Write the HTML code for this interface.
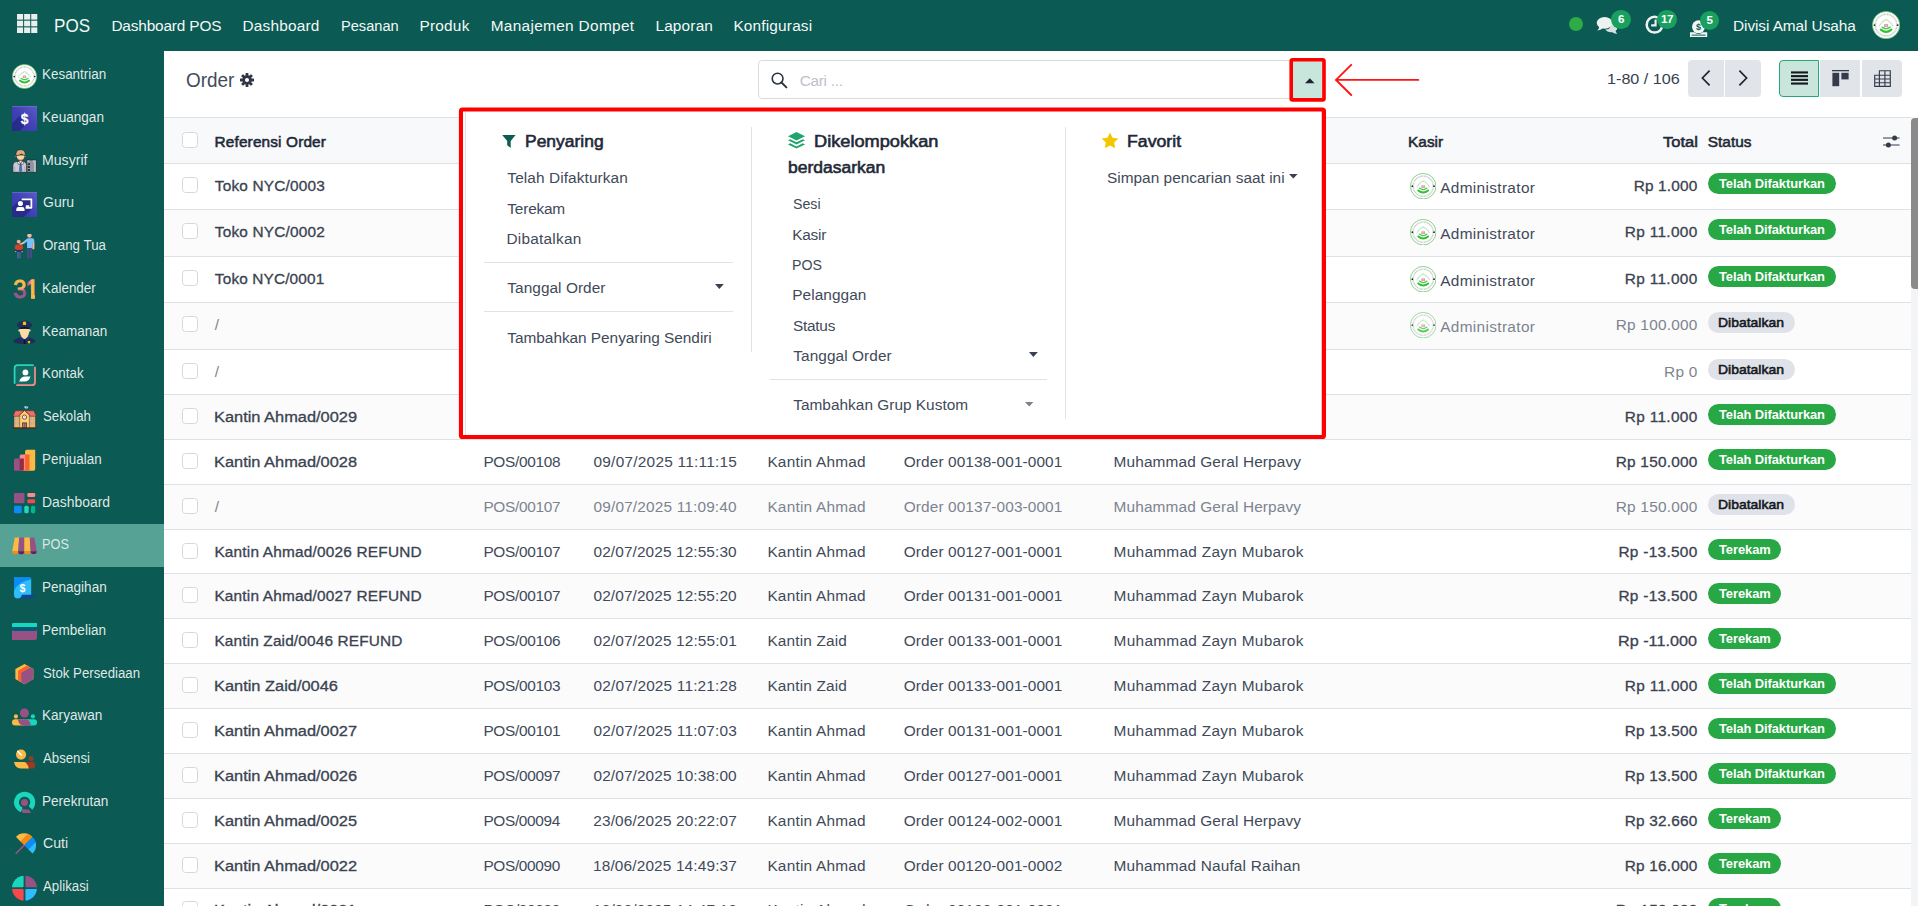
<!DOCTYPE html><html lang="id"><head><meta charset="utf-8"><title>Order - POS</title><style>
*{box-sizing:border-box;margin:0;padding:0}
html,body{width:1918px;height:906px;overflow:hidden;background:#fff}
body{font-family:"Liberation Sans",sans-serif;font-size:15.4px;color:#374151;position:relative}
.t{position:absolute;white-space:nowrap;line-height:20px}
.abs{position:absolute}
#nav{position:absolute;left:0;top:0;width:1918px;height:51px;background:#0b5a53}
#side{position:absolute;left:0;top:51px;width:164px;height:855px;background:#0b5a53}
.row{position:absolute;left:164px;width:1747px;border-bottom:1px solid #dee2e6}
.row.alt{background:#fbfbfc}
.row.hd{background:#f8f9fa;border-top:1px solid #dee2e6}
.cb{position:absolute;left:182.4px;width:15.4px;height:15.4px;border:1px solid #d3d8de;border-radius:3.5px;background:#fff}
.bdg{position:absolute;height:21.1px;border-radius:10.6px}
.bdg.g{background:#28a745}
.bdg.s{background:#dfe2e8}
.btn{position:absolute;background:#e1e4e8}
</style></head><body>
<div id="nav"></div>
<svg class="abs" style="left:17px;top:14px" width="21" height="19" viewBox="0 0 21 19"><g fill="#e8efed"><rect x="0" y="0" width="6.1" height="5.6"/><rect x="7.1" y="0" width="6.1" height="5.6"/><rect x="14.2" y="0" width="6.1" height="5.6"/><rect x="0" y="6.7" width="6.1" height="5.6"/><rect x="7.1" y="6.7" width="6.1" height="5.6"/><rect x="14.2" y="6.7" width="6.1" height="5.6"/><rect x="0" y="13.4" width="6.1" height="5.6"/><rect x="7.1" y="13.4" width="6.1" height="5.6"/><rect x="14.2" y="13.4" width="6.1" height="5.6"/></g></svg>
<span class="t" style="left:53.97px;top:16px;font-size:18.2px;color:#f4f8f7;transform:scaleX(0.9380);transform-origin:0 0;">POS</span>
<span class="t" style="left:111.40px;top:16px;font-size:15.4px;color:#f4f8f7;letter-spacing:-0.166px;">Dashboard POS</span>
<span class="t" style="left:242.50px;top:16px;font-size:15.4px;color:#f4f8f7;letter-spacing:0.204px;">Dashboard</span>
<span class="t" style="left:340.66px;top:16px;font-size:15.4px;color:#f4f8f7;transform:scaleX(0.9484);transform-origin:0 0;">Pesanan</span>
<span class="t" style="left:419.40px;top:16px;font-size:15.4px;color:#f4f8f7;letter-spacing:0.234px;">Produk</span>
<span class="t" style="left:490.70px;top:16px;font-size:15.4px;color:#f4f8f7;letter-spacing:0.319px;">Manajemen Dompet</span>
<span class="t" style="left:655.40px;top:16px;font-size:15.4px;color:#f4f8f7;letter-spacing:0.175px;">Laporan</span>
<span class="t" style="left:733.40px;top:16px;font-size:15.4px;color:#f4f8f7;letter-spacing:0.177px;">Konfigurasi</span>
<div class="abs" style="left:1569.2px;top:17.1px;width:14.2px;height:14.2px;border-radius:50%;background:#2eab47"></div><svg class="abs" style="left:1596px;top:15px" width="24" height="21" viewBox="0 0 24 21"><path d="M14.6 7.4 Q21.4 8.2 21.4 12.6 Q21.4 14.8 19.6 16 Q20 17.6 21.4 18.8 Q18.4 18.8 16.4 17.2 Q11.4 17.8 9.4 14.6 Q15.6 14.4 14.6 7.4z" fill="#d5e1df"/><ellipse cx="8.6" cy="7.8" rx="7.9" ry="5.9" fill="#eef3f2"/><path d="M3.4 11.4 Q3.2 13.8 1.2 15.4 Q4.8 15.2 7 13z" fill="#eef3f2"/></svg><svg class="abs" style="left:1644px;top:14px" width="22" height="22" viewBox="0 0 22 22"><circle cx="10.6" cy="10.7" r="7.9" fill="none" stroke="#eef3f2" stroke-width="2.5"/><path d="M11.6 5.4 V11.4 H7.2" fill="none" stroke="#eef3f2" stroke-width="2.1"/></svg><svg class="abs" style="left:1689px;top:19px" width="20" height="19" viewBox="0 0 20 19"><circle cx="9.5" cy="7.8" r="6.5" fill="#f3f7f6"/><text x="9.5" y="11.1" font-family="Liberation Sans,sans-serif" font-weight="bold" font-size="9" text-anchor="middle" fill="#0b5a53">$</text><path d="M1 13.2 H5.4 Q7 15 9.5 15 Q12 15 13.6 13.2 H18.2 V18 H1z" fill="#f3f7f6"/><rect x="2.6" y="15.6" width="14" height="1" fill="#0b5a53"/></svg><div class="abs" style="left:1611.2px;top:10.1px;width:19.4px;height:19.2px;border-radius:50%;background:#19a05f;color:#fff;font-weight:bold;font-size:11.6px;line-height:18.6px;text-align:center;letter-spacing:-0.5px">6</div><div class="abs" style="left:1657.3px;top:10.1px;width:19.4px;height:19.2px;border-radius:50%;background:#19a05f;color:#fff;font-weight:bold;font-size:11.6px;line-height:18.6px;text-align:center;letter-spacing:-0.5px">17</div><div class="abs" style="left:1699.9px;top:10.9px;width:19.4px;height:19.2px;border-radius:50%;background:#19a05f;color:#fff;font-weight:bold;font-size:11.6px;line-height:18.6px;text-align:center;letter-spacing:-0.5px">5</div>
<span class="t" style="left:1733.00px;top:16px;font-size:15.4px;color:#f4f8f7;letter-spacing:-0.077px;">Divisi Amal Usaha</span>
<div class="abs" style="left:1871.6px;top:10.7px;width:28.2px;height:28.2px"><svg width="28.2" height="28.2" viewBox="0 0 28 28" style="display:block"><circle cx="14" cy="14" r="13.55" fill="#fff" stroke="#63c463" stroke-width="0.8"/><circle cx="14" cy="14" r="10.7" fill="none" stroke="#b4b4bc" stroke-width="1.6" stroke-dasharray="0.9 0.6" opacity=".8"/><path d="M7.4 15.2 Q8.2 12 14 8.6 Q19.8 12 20.6 15.2" fill="none" stroke="#6fd36f" stroke-width="0.9" stroke-dasharray="1.1 0.5"/><path d="M8.4 12.2 Q10 9.8 14 7.6 Q18 9.8 19.6 12.2" fill="none" stroke="#a8e5a8" stroke-width="0.6" stroke-dasharray="0.8 0.6"/><rect x="12" y="13" width="4" height="2.8" rx="0.5" fill="#e07fa6" opacity=".85"/><path d="M13 13.9 H15 M13.4 14.9 H14.6" stroke="#fbe3ec" stroke-width="0.5"/><path d="M10 16 Q14 19.2 18 16" fill="none" stroke="#45cc45" stroke-width="1.35" stroke-linecap="round"/><path d="M8.8 18.5 Q14 22.9 19.2 18.5" fill="none" stroke="#2fc22f" stroke-width="2.1" stroke-linecap="round"/><circle cx="2.5" cy="14" r="0.95" fill="#222"/><circle cx="25.5" cy="14" r="0.95" fill="#222"/></svg></div>
<div id="side"></div>
<div class="abs" style="left:12px;top:63.5px;width:25px;height:25px"><svg width="25" height="25" viewBox="0 0 28 28" style="display:block"><circle cx="14" cy="14" r="13.55" fill="#fff" stroke="#63c463" stroke-width="0.8"/><circle cx="14" cy="14" r="10.7" fill="none" stroke="#b4b4bc" stroke-width="1.6" stroke-dasharray="0.9 0.6" opacity=".8"/><path d="M7.4 15.2 Q8.2 12 14 8.6 Q19.8 12 20.6 15.2" fill="none" stroke="#6fd36f" stroke-width="0.9" stroke-dasharray="1.1 0.5"/><path d="M8.4 12.2 Q10 9.8 14 7.6 Q18 9.8 19.6 12.2" fill="none" stroke="#a8e5a8" stroke-width="0.6" stroke-dasharray="0.8 0.6"/><rect x="12" y="13" width="4" height="2.8" rx="0.5" fill="#e07fa6" opacity=".85"/><path d="M13 13.9 H15 M13.4 14.9 H14.6" stroke="#fbe3ec" stroke-width="0.5"/><path d="M10 16 Q14 19.2 18 16" fill="none" stroke="#45cc45" stroke-width="1.35" stroke-linecap="round"/><path d="M8.8 18.5 Q14 22.9 19.2 18.5" fill="none" stroke="#2fc22f" stroke-width="2.1" stroke-linecap="round"/><circle cx="2.5" cy="14" r="0.95" fill="#222"/><circle cx="25.5" cy="14" r="0.95" fill="#222"/></svg></div>
<span class="t" style="left:42.35px;top:64px;font-size:15.4px;color:rgba(255,255,255,.88);transform:scaleX(0.8720);transform-origin:0 0;">Kesantrian</span>
<div class="abs" style="left:12px;top:106.2px;width:25px;height:25px"><svg width="25" height="25" viewBox="0 0 25 25" style="display:block"><defs><linearGradient id="gk" x1="1" y1="0" x2="0" y2="1"><stop offset="0" stop-color="#5a5ac8"/><stop offset=".5" stop-color="#4141b6"/><stop offset="1" stop-color="#3434a8"/></linearGradient></defs><rect width="25" height="25" rx="0.6" fill="url(#gk)"/><rect width="25" height="0.8" fill="#7a7ad6" opacity=".7"/><path d="M9 8.6 L0 17.6 V25 H7.4 L16.4 16z" fill="#272a86" opacity=".9"/><text x="12.5" y="17.5" font-family="Liberation Sans,sans-serif" font-weight="bold" font-size="15.2" text-anchor="middle" fill="#fff" stroke="#fff" stroke-width="0.3" textLength="7.6" lengthAdjust="spacingAndGlyphs">$</text></svg></div>
<span class="t" style="left:42.34px;top:107px;font-size:15.4px;color:rgba(255,255,255,.88);transform:scaleX(0.8833);transform-origin:0 0;">Keuangan</span>
<div class="abs" style="left:12px;top:148.9px;width:25px;height:25px"><svg width="25" height="25" viewBox="0 0 25 25" style="display:block"><rect x="14.7" y="11" width="9.7" height="12.3" rx="0.8" fill="#8e95a2" stroke="#22262b" stroke-width="0.7"/><path d="M15.4 11.4 H18 L17.2 13 H15.4z M20.4 11.4 H23.8 V22.8 H22 V14.4z" fill="#b9c0cb"/><g fill="#2b2e33"><rect x="15.8" y="14.2" width="2.2" height="1.9" rx="0.6"/><rect x="15.8" y="17.1" width="2.2" height="1.9" rx="0.6"/><rect x="15.8" y="20" width="2.2" height="1.9" rx="0.6"/></g><path d="M0.8 23.3 V16.4 Q0.8 12.7 4.6 12.5 H11.6 Q14.7 12.7 14.7 16.4 V23.3z" fill="#c9ccd7" stroke="#22262b" stroke-width="0.8"/><path d="M2.8 23 V17.6 M12.8 23 V17.6" stroke="#a9adb9" stroke-width="1"/><path d="M6.9 11 H10.3 V13.6 L8.6 14.8 L6.9 13.6z" fill="#fbd5a6" stroke="#22262b" stroke-width="0.6"/><path d="M5.4 12.7 L6.9 12.4 L8.6 14.6 L6.4 15.6z M11.8 12.7 L10.3 12.4 L8.6 14.6 L10.8 15.6z" fill="#f1f3f7" stroke="#22262b" stroke-width="0.5"/><path d="M8 15 H9.2 L9.9 21.6 L8.6 23.2 L7.3 21.6z" fill="#4a78c4" stroke="#22304a" stroke-width="0.4"/><circle cx="4" cy="7.2" r="0.9" fill="#fbd5a6" stroke="#22262b" stroke-width="0.5"/><circle cx="13.2" cy="7.2" r="0.9" fill="#fbd5a6" stroke="#22262b" stroke-width="0.5"/><path d="M4.2 6 Q4.2 11.2 8.6 11.3 Q13 11.2 13 6z" fill="#fbd5a6" stroke="#22262b" stroke-width="0.6"/><path d="M3.9 6.6 Q3.4 0.7 8.6 0.7 Q13.8 0.7 13.3 6.6 Q11.4 6.4 9.6 5 Q7 6.6 3.9 6.6z" fill="#d9ad7c" stroke="#22262b" stroke-width="0.6"/></svg></div>
<span class="t" style="left:42.30px;top:150px;font-size:15.4px;color:rgba(255,255,255,.88);transform:scaleX(0.9160);transform-origin:0 0;">Musyrif</span>
<div class="abs" style="left:12px;top:191.7px;width:25px;height:25px"><svg width="25" height="25" viewBox="0 0 25 25" style="display:block"><defs><linearGradient id="gg" x1="1" y1="0" x2="0" y2="1"><stop offset="0" stop-color="#5a5ac8"/><stop offset=".5" stop-color="#4141b6"/><stop offset="1" stop-color="#3434a8"/></linearGradient></defs><rect width="25" height="25" rx="0.6" fill="url(#gg)"/><rect width="25" height="0.8" fill="#7a7ad6" opacity=".7"/><path d="M9 6.4 L0 15.4 V25 H11.6 L20.4 16.4 L20.4 7z" fill="#272a86" opacity=".9"/><path d="M9.6 7.3 H19.4 V15.8 H13.6" fill="none" stroke="#fff" stroke-width="1.8" stroke-linejoin="round"/><rect x="13.8" y="13.3" width="3.6" height="1.9" fill="#fff"/><circle cx="8.4" cy="11.5" r="2.55" fill="#fff"/><path d="M4.3 18.9 V17.2 Q4.3 15.1 6.6 15.1 H10.2 Q12.5 15.1 12.5 17.2 V18.9z" fill="#fff"/></svg></div>
<span class="t" style="left:42.74px;top:192px;font-size:15.4px;color:rgba(255,255,255,.88);transform:scaleX(0.9097);transform-origin:0 0;">Guru</span>
<div class="abs" style="left:12px;top:234.4px;width:25px;height:25px"><svg width="25" height="25" viewBox="0 0 25 25" style="display:block"><circle cx="17.45" cy="1.6" r="2.2" fill="#fcb9a0"/><rect x="15.1" y="13.6" width="2.1" height="10.8" fill="#484a8c"/><rect x="17.8" y="13.6" width="2.1" height="10.8" fill="#484a8c"/><path d="M20.3 8.6 H22.4 V14.4 Q22.4 15.3 21.4 15.3 Q20.3 15.3 20.3 14.4z" fill="#fcb9a0"/><path d="M15.1 13.9 V7.6 L12.6 9.4 L11.4 7.6 L14.6 4.9 Q15.2 4.3 16.2 4.3 H20.4 Q22.3 4.3 22.3 6.2 V9 H20.2 V13.9z" fill="#7cc0fb"/><path d="M12.7 9.3 L9 10.9 Q7.6 11.2 7.4 10.2 Q7.4 9.4 8.6 9.2 L11.6 7.7z" fill="#fcb9a0"/><rect x="5.1" y="17" width="1.7" height="7.4" fill="#4f6394"/><rect x="7.2" y="17" width="1.7" height="7.4" fill="#4a5a90"/><path d="M3.2 15.4 H10.6 V17.8 H3.2z" fill="#252f66"/><rect x="2.9" y="17.3" width="1.5" height="0.8" fill="#f3c09a"/><rect x="9.4" y="17.3" width="1.5" height="0.8" fill="#f3c09a"/><circle cx="6.7" cy="7.6" r="1.95" fill="#f9a890"/><path d="M2.7 14 Q2.7 10.4 5 10.4 H8.8 Q11.1 10.4 11.1 14 Q11 16 6.9 16 Q2.8 16 2.7 14z" fill="#c8452c"/></svg></div>
<span class="t" style="left:42.78px;top:235px;font-size:15.4px;color:rgba(255,255,255,.88);transform:scaleX(0.8658);transform-origin:0 0;">Orang Tua</span>
<div class="abs" style="left:12px;top:277.2px;width:25px;height:25px"><svg width="25" height="25" viewBox="0 0 25 25" style="display:block"><defs><linearGradient id="g3" gradientUnits="userSpaceOnUse" x1="0" y1="2.7" x2="0" y2="21.9"><stop offset="0" stop-color="#fbb945"/><stop offset=".44" stop-color="#fbb945"/><stop offset=".5" stop-color="#f58c8e"/><stop offset=".56" stop-color="#a2548c"/><stop offset="1" stop-color="#a2548c"/></linearGradient><linearGradient id="g1" gradientUnits="userSpaceOnUse" x1="15.4" y1="0" x2="19.6" y2="0"><stop offset="0" stop-color="#a2548c"/><stop offset=".55" stop-color="#e07a92"/><stop offset=".8" stop-color="#f58c8e"/><stop offset="1" stop-color="#fbb945"/></linearGradient></defs><text x="1.2" y="21.2" font-family="Liberation Sans,sans-serif" font-size="26.4" fill="url(#g3)" stroke="url(#g3)" stroke-width="0.9" textLength="13.2" lengthAdjust="spacingAndGlyphs">3</text><clipPath id="c1"><rect x="14" y="0" width="5.8" height="12.5"/><rect x="19" y="0" width="4" height="25"/></clipPath><text x="13.5" y="21.2" clip-path="url(#c1)" font-family="Liberation Sans,sans-serif" font-size="26.4" fill="url(#g1)" stroke="url(#g1)" stroke-width="1.5" textLength="13.2" lengthAdjust="spacingAndGlyphs">1</text></svg></div>
<span class="t" style="left:42.35px;top:278px;font-size:15.4px;color:rgba(255,255,255,.88);transform:scaleX(0.8730);transform-origin:0 0;">Kalender</span>
<div class="abs" style="left:12px;top:319.9px;width:25px;height:25px"><svg width="25" height="25" viewBox="0 0 25 25" style="display:block"><path d="M1.4 21.4 Q2 18.4 9.2 17.2 H15.8 Q23 18.4 23.6 21.4 Q23 23.4 12.5 24.1 Q2 23.4 1.4 21.4z" fill="#1d2d5c"/><path d="M9.3 13 H15.7 V17.4 L12.5 19.8 L9.3 17.4z" fill="#f6cfa0"/><path d="M9.2 16.8 L12.5 19.6 L15.8 16.8 L16.6 18 L13.6 20.6 H11.4 L8.4 18z" fill="#243a78"/><rect x="11.7" y="19.4" width="1.6" height="4.7" fill="#111318"/><rect x="15.9" y="21.1" width="2.2" height="2.2" rx="0.3" fill="#f0c40c"/><circle cx="7.3" cy="10.6" r="1" fill="#fbe0ba"/><circle cx="17.7" cy="10.6" r="1" fill="#fbe0ba"/><path d="M7.7 8.4 H17.3 V11.6 Q17 15.6 14.6 17.2 Q12.5 18.2 10.4 17.2 Q8 15.6 7.7 11.6z" fill="#fbd9ab"/><path d="M7.3 7.6 Q12.5 6.4 17.7 7.6 L17.4 9 Q12.5 8.4 7.6 9z" fill="#0d0e12"/><path d="M4.9 5.2 Q5.4 1.8 12.5 0.3 Q19.6 1.8 20.1 5.2 Q19.6 6.8 17.8 7.7 Q12.5 6.5 7.2 7.7 Q5.4 6.8 4.9 5.2z" fill="#1d2d5c"/><path d="M10.9 2.6 Q10.9 1.4 12.5 1.4 Q14.1 1.4 14.1 2.6 V5.1 H10.9z" fill="#f0c40c"/></svg></div>
<span class="t" style="left:42.35px;top:321px;font-size:15.4px;color:rgba(255,255,255,.88);transform:scaleX(0.8754);transform-origin:0 0;">Keamanan</span>
<div class="abs" style="left:12px;top:362.6px;width:25px;height:25px"><svg width="25" height="25" viewBox="0 0 25 25" style="display:block"><rect x="2.8" y="2.4" width="20" height="19.6" rx="3" fill="#136c63"/><path d="M2.6 20 V5.2 Q2.6 2.2 5.6 2.2 H21" fill="none" stroke="#2bd4b8" stroke-width="1.8" stroke-linecap="round"/><path d="M23 4.4 V19.2 Q23 22.2 20 22.2 H5" fill="none" stroke="#f08a8c" stroke-width="1.8" stroke-linecap="round"/><circle cx="13.4" cy="9.4" r="2.9" fill="#fff"/><path d="M7.2 18.4 Q8.6 13.4 13.4 13.4 H18.4 Q17.2 18.4 12.4 18.4z" fill="#fff"/></svg></div>
<span class="t" style="left:42.36px;top:363px;font-size:15.4px;color:rgba(255,255,255,.88);transform:scaleX(0.8684);transform-origin:0 0;">Kontak</span>
<div class="abs" style="left:12px;top:405.4px;width:25px;height:25px"><svg width="25" height="25" viewBox="0 0 25 25" style="display:block"><path d="M12.5 5.6 V2.6" stroke="#3a2a2a" stroke-width="0.5"/><path d="M12.4 1.2 L16.4 1.8 L15.4 3.6 L12.6 3.2z" fill="#dfeaf5"/><path d="M13.6 1.6 L15.4 2 L14.8 3 L13.6 2.8z" fill="#5aa7e0"/><rect x="2" y="11" width="21.4" height="11.8" fill="#f2b45a" stroke="#5a2f2a" stroke-width="0.5"/><path d="M1 11.1 L3.4 5.8 H21.8 L24.2 11.1z" fill="#f0706a" stroke="#5a2f2a" stroke-width="0.5"/><path d="M7.7 22.8 V10 L12.5 5.6 L17.4 10 V22.8z" fill="#f8d477" stroke="#5a2f2a" stroke-width="0.5"/><path d="M6.9 10.6 L12.5 5.4 L18.1 10.6" fill="none" stroke="#8a2f2c" stroke-width="0.8"/><circle cx="12.5" cy="12.1" r="2.1" fill="#fff" stroke="#8a2a2a" stroke-width="0.9"/><path d="M12.5 11 V12.2 H13.3" stroke="#777" stroke-width="0.4" fill="none"/><rect x="10.5" y="17.9" width="4.2" height="4.9" fill="#b97a78" stroke="#4a1f22" stroke-width="0.7"/><path d="M12.6 18 V22.8" stroke="#4a1f22" stroke-width="0.4"/><g fill="#a9b1be"><rect x="2.75" y="12.5" width="1.5" height="2.8"/><rect x="5.3" y="12.5" width="1.5" height="2.8"/><rect x="2.75" y="16.9" width="1.5" height="2.8"/><rect x="5.3" y="16.9" width="1.5" height="2.8"/><rect x="18.4" y="12.5" width="1.5" height="2.8"/><rect x="21" y="12.5" width="1.5" height="2.8"/><rect x="18.4" y="16.9" width="1.5" height="2.8"/><rect x="21" y="16.9" width="1.5" height="2.8"/></g><rect x="0.2" y="22.6" width="24.4" height="1" fill="#4a2a25"/></svg></div>
<span class="t" style="left:42.99px;top:406px;font-size:15.4px;color:rgba(255,255,255,.88);transform:scaleX(0.8618);transform-origin:0 0;">Sekolah</span>
<div class="abs" style="left:12px;top:448.1px;width:25px;height:25px"><svg width="25" height="25" viewBox="0 0 25 25" style="display:block"><path d="M13.1 22.7 V3.4 Q13.1 1.8 14.7 1.8 H23.2 V21.1 Q23.2 22.7 21.6 22.7z" fill="#fbb945"/><path d="M7.7 22.7 V8 Q7.7 6.4 9.3 6.4 H13.1 V22.7z" fill="#fb8a8c"/><path d="M13.1 6.4 H17.5 V21.6 Q17.5 22.7 16.4 22.7 H13.1z" fill="#f9642a"/><path d="M2 22.7 V12.2 Q2 10.6 3.6 10.6 H7.7 V22.7z" fill="#985184"/><path d="M7.7 10.6 H11.9 V21.6 Q11.9 22.7 10.8 22.7 H7.7z" fill="#962b48"/></svg></div>
<span class="t" style="left:42.35px;top:449px;font-size:15.4px;color:rgba(255,255,255,.88);transform:scaleX(0.8715);transform-origin:0 0;">Penjualan</span>
<div class="abs" style="left:12px;top:490.9px;width:25px;height:25px"><svg width="25" height="25" viewBox="0 0 25 25" style="display:block"><rect x="2" y="2" width="10.5" height="10.3" rx="1.3" fill="#985184"/><rect x="15.3" y="2" width="7.9" height="4" rx="1.3" fill="#fb8a8c"/><rect x="15.3" y="8.2" width="7.9" height="4.1" rx="1.3" fill="#fb464c"/><rect x="2" y="14.8" width="7.7" height="7.4" rx="1.3" fill="#0a8cf4"/><rect x="12.3" y="14.8" width="4.4" height="7.4" rx="1.5" fill="#1ad9c0"/><rect x="19" y="14.8" width="4.2" height="7.4" rx="1.5" fill="#03b58e"/></svg></div>
<span class="t" style="left:42.31px;top:492px;font-size:15.4px;color:rgba(255,255,255,.88);transform:scaleX(0.9035);transform-origin:0 0;">Dashboard</span>
<div class="abs" style="left:0;top:524.2px;width:164px;height:42.8px;background:#56a295"></div>
<div class="abs" style="left:12px;top:533.6px;width:25px;height:25px"><svg width="25" height="25" viewBox="-0.2 0 25.4 25" style="display:block"><path d="M2.6 3.3 H7.1 L6.1 17.2 H0z" fill="#fbb945"/><path d="M0 17.2 H6.1 A3.05 3.2 0 0 1 0 17.2z" fill="#fb8a0c"/><path d="M7.1 3.3 H12.3 L12.3 17.2 H6.1z" fill="#985184"/><path d="M6.1 17.2 H12.3 A3.10 3.2 0 0 1 6.1 17.2z" fill="#6e1d5c"/><path d="M12.3 3.3 H17.85 L18.65 17.2 H12.3z" fill="#fbb945"/><path d="M12.3 17.2 H18.65 A3.17 3.2 0 0 1 12.3 17.2z" fill="#fb8a0c"/><path d="M17.85 3.3 H22.4 L25 17.2 H18.65z" fill="#985184"/><path d="M18.65 17.2 H25 A3.18 3.2 0 0 1 18.65 17.2z" fill="#6e1d5c"/></svg></div>
<span class="t" style="left:42.40px;top:534px;font-size:15.4px;color:rgba(255,255,255,.78);transform:scaleX(0.8281);transform-origin:0 0;">POS</span>
<div class="abs" style="left:12px;top:576.3px;width:25px;height:25px"><svg width="25" height="25" viewBox="0 0 25 25" style="display:block"><path d="M9.6 18.7 H23.2 Q22.6 22.5 19.4 22.5 H6z" fill="#144496"/><path d="M2 1.6 H17.8 Q19.2 1.6 19.2 3 V18.7 H9.8 Q9.4 22.5 5.6 22.5 Q2 22.5 2 18.8z" fill="#2ebcfa"/><path d="M2 1.6 H17.8 Q19.2 1.6 19.2 3 V3.6 Q6 5.4 2 15z" fill="#0a8cf4"/><text x="10.5" y="15.6" font-family="Liberation Sans,sans-serif" font-weight="bold" font-size="10.6" text-anchor="middle" fill="#fff">$</text></svg></div>
<span class="t" style="left:42.34px;top:577px;font-size:15.4px;color:rgba(255,255,255,.88);transform:scaleX(0.8788);transform-origin:0 0;">Penagihan</span>
<div class="abs" style="left:12px;top:619.1px;width:25px;height:25px"><svg width="25" height="25" viewBox="0 0 25.2 25" style="display:block"><path d="M0 5.3 Q0 3.85 1.5 3.85 H25.2 V8.05 H0z" fill="#1ad6bc"/><rect x="0" y="8.05" width="25.2" height="3.9" fill="#005c78"/><path d="M0 10.9 L1.4 11.9 H23.8 L25.2 10.9 V19.6 L23.8 20.95 H0z" fill="#985184"/></svg></div>
<span class="t" style="left:42.34px;top:620px;font-size:15.4px;color:rgba(255,255,255,.88);transform:scaleX(0.8798);transform-origin:0 0;">Pembelian</span>
<div class="abs" style="left:12px;top:661.8px;width:25px;height:25px"><svg width="25" height="25" viewBox="0 0 25 25" style="display:block"><path d="M12.5 1.9 L21.4 7.1 V17 L12.5 22.2 L3.35 17 V7.1z" fill="#fbb945"/><path d="M6.1 8.7 L15.1 3.6 L18.6 5.6 L9.1 10.9 V20 L6.1 18.4z" fill="#f9642a"/><path d="M9.1 10.7 L18.25 5.4 L21.4 7.1 V17 L12.5 22.2 L9.1 20z" fill="#985184"/></svg></div>
<span class="t" style="left:42.99px;top:663px;font-size:15.4px;color:rgba(255,255,255,.88);transform:scaleX(0.8589);transform-origin:0 0;">Stok Persediaan</span>
<div class="abs" style="left:12px;top:704.6px;width:25px;height:25px"><svg width="25" height="25" viewBox="0 0 25.2 25" style="display:block"><circle cx="3.95" cy="11.4" r="2.1" fill="#fbb945"/><circle cx="21.05" cy="11.4" r="2.15" fill="#1ad6bc"/><path d="M0 17.3 Q0 14.3 3 14.3 H12.5 V20.5 H3 Q0 20.5 0 17.5z" fill="#fbb945"/><path d="M25.2 17.3 Q25.2 14.3 22.2 14.3 H12.5 V20.5 H22.2 Q25.2 20.5 25.2 17.5z" fill="#1ad6bc"/><circle cx="12.5" cy="7.95" r="4.55" fill="#985184"/><path d="M5.9 14.3 H14.4 Q18.4 15.4 18.9 20.5 H10.2 Q6.5 19.2 5.9 14.3z" fill="#985184"/></svg></div>
<span class="t" style="left:42.34px;top:705px;font-size:15.4px;color:rgba(255,255,255,.88);transform:scaleX(0.8824);transform-origin:0 0;">Karyawan</span>
<div class="abs" style="left:12px;top:747.3px;width:25px;height:25px"><svg width="25" height="25" viewBox="0 0 25 25" style="display:block"><circle cx="19.05" cy="11.6" r="2.5" fill="#9a3a22"/><path d="M12 15 H21 Q23 15 23 17 V19.5 Q23 21.5 21 21.5 H14z" fill="#9a3a22"/><circle cx="9.05" cy="7.6" r="5.1" fill="#fbb945"/><path d="M5.7 4.4 L9.3 8" stroke="#fff" stroke-width="1.5" stroke-linecap="round"/><path d="M2 15 H12.6 Q15.8 16.6 16.8 21.5 H8.6 Q3.2 21.2 2 15z" fill="#fbb945"/></svg></div>
<span class="t" style="left:43.40px;top:748px;font-size:15.4px;color:rgba(255,255,255,.88);transform:scaleX(0.8573);transform-origin:0 0;">Absensi</span>
<div class="abs" style="left:12px;top:790.0px;width:25px;height:25px"><svg width="25" height="25" viewBox="0 0 25 25" style="display:block"><path d="M8.3 17.2 Q12.4 20.2 16.4 19.2 Q18.6 20.6 19 23 H10.8 Q8.4 20.8 8.3 17.2z" fill="#985184"/><path d="M9.55 19.87 A8.13 8.13 0 1 1 18.45 17.98" fill="none" stroke="#1ad6bc" stroke-width="4.95"/><circle cx="12.5" cy="12.45" r="3.5" fill="#985184"/></svg></div>
<span class="t" style="left:42.34px;top:791px;font-size:15.4px;color:rgba(255,255,255,.88);transform:scaleX(0.8818);transform-origin:0 0;">Perekrutan</span>
<div class="abs" style="left:12px;top:832.8px;width:25px;height:25px"><svg width="25" height="25" viewBox="0 0 25.2 25" style="display:block"><defs><clipPath id="cu"><path d="M-12 0.2 A12 12 0 0 1 12 0.2z"/></clipPath></defs><g transform="translate(12.4 12.1) rotate(45)"><path d="M0 0 V11.6" stroke="#985184" stroke-width="1.7" stroke-linecap="round"/><g clip-path="url(#cu)"><rect x="-12.2" y="-12.2" width="7.2" height="12.6" fill="#fbb945"/><rect x="-5.2" y="-12.2" width="5.4" height="12.6" fill="#f78a13"/><rect x="0" y="-12.2" width="6.2" height="12.6" fill="#0a8cf4"/><rect x="6" y="-12.2" width="6.4" height="12.6" fill="#2ebcfa"/></g></g></svg></div>
<span class="t" style="left:42.74px;top:833px;font-size:15.4px;color:rgba(255,255,255,.88);transform:scaleX(0.9162);transform-origin:0 0;">Cuti</span>
<div class="abs" style="left:12px;top:875.5px;width:25px;height:25px"><svg width="25" height="25" viewBox="0 0 25.2 25" style="display:block"><defs><clipPath id="ap"><circle cx="12.6" cy="12.1" r="12.6"/></clipPath></defs><g clip-path="url(#ap)"><rect x="-1" y="-1" width="12.7" height="12.2" rx="1.2" fill="#1ad6bc"/><rect x="13.5" y="-1" width="13" height="12.2" rx="1.2" fill="#985184"/><rect x="-1" y="13" width="12.7" height="13" rx="1.2" fill="#fb464c"/><rect x="13.5" y="13" width="13" height="13" rx="1.2" fill="#2ebcfa"/></g></svg></div>
<span class="t" style="left:43.40px;top:876px;font-size:15.4px;color:rgba(255,255,255,.88);transform:scaleX(0.8626);transform-origin:0 0;">Aplikasi</span>
<span class="t" style="left:186.41px;top:70px;font-size:19.8px;color:#434b5a;transform:scaleX(0.9559);transform-origin:0 0;">Order</span>
<svg class="abs" style="left:240px;top:73.4px" width="14" height="14" viewBox="0 0 14 14"><g fill="#2f3744"><circle cx="7" cy="7" r="4.7"/><rect x="5.6" y="0" width="2.8" height="3.4" rx="0.5" transform="rotate(0 7 7)"/><rect x="5.6" y="0" width="2.8" height="3.4" rx="0.5" transform="rotate(45 7 7)"/><rect x="5.6" y="0" width="2.8" height="3.4" rx="0.5" transform="rotate(90 7 7)"/><rect x="5.6" y="0" width="2.8" height="3.4" rx="0.5" transform="rotate(135 7 7)"/><rect x="5.6" y="0" width="2.8" height="3.4" rx="0.5" transform="rotate(180 7 7)"/><rect x="5.6" y="0" width="2.8" height="3.4" rx="0.5" transform="rotate(225 7 7)"/><rect x="5.6" y="0" width="2.8" height="3.4" rx="0.5" transform="rotate(270 7 7)"/><rect x="5.6" y="0" width="2.8" height="3.4" rx="0.5" transform="rotate(315 7 7)"/></g><circle cx="7" cy="7" r="2" fill="#fff"/></svg>
<div class="abs" style="left:758px;top:60px;width:533px;height:39px;border:1px solid #d8dbdf;border-radius:4px 0 0 4px;background:#fff"></div>
<svg class="abs" style="left:770.6px;top:71.8px" width="17" height="17" viewBox="0 0 17 17"><circle cx="6.6" cy="6.6" r="5.4" fill="none" stroke="#2c3340" stroke-width="1.6"/><path d="M10.5 10.5 L15.4 15.4" stroke="#2c3340" stroke-width="1.9" stroke-linecap="round"/></svg>
<span class="t" style="left:799.68px;top:71px;font-size:15.4px;color:#bcc2ca;letter-spacing:-0.291px;">Cari ...</span>
<svg class="abs" style="left:1286px;top:55px" width="44" height="50" viewBox="1286 55 44 50"><rect x="1291.2" y="59.7" width="32.8" height="40.2" rx="1.4" fill="#c8e6dc" stroke="#fe0000" stroke-width="3.6"/></svg>
<svg class="abs" style="left:1304.6px;top:77.9px" width="10" height="6" viewBox="0 0 10 6"><path d="M0 5.2 L4.8 0.2 L9.6 5.2z" fill="#1f2430"/></svg>
<svg class="abs" style="left:1330px;top:60px" width="95" height="40" viewBox="0 0 95 40"><path d="M88.3 19.9 H6.4 M21.2 4.8 L6 19.9 L21.2 35" fill="none" stroke="#fe1616" stroke-width="1.9" stroke-linecap="round" stroke-linejoin="miter"/></svg>
<span class="t" style="left:1607.19px;top:69px;font-size:15.4px;color:#374151;transform:scaleX(1.0507);transform-origin:0 0;">1-80 / 106</span>
<div class="btn" style="left:1688.2px;top:60px;width:35.6px;height:37px;border-radius:4px 0 0 4px"></div>
<div class="btn" style="left:1724.9px;top:60px;width:36.2px;height:37px;border-radius:0 4px 4px 0"></div>
<svg class="abs" style="left:1700px;top:69px" width="12" height="18" viewBox="0 0 12 18"><path d="M9.6 1.6 L2.4 9 L9.6 16.4" fill="none" stroke="#20242c" stroke-width="1.7"/></svg>
<svg class="abs" style="left:1736.8px;top:69px" width="12" height="18" viewBox="0 0 12 18"><path d="M2.4 1.6 L9.6 9 L2.4 16.4" fill="none" stroke="#20242c" stroke-width="1.7"/></svg>
<div class="abs" style="left:1778.8px;top:60px;width:40.2px;height:37px;border-radius:4px 0 0 4px;background:#c8e6dc;border:1px solid #25a874"></div>
<div class="btn" style="left:1820.1px;top:60px;width:40.4px;height:37px"></div>
<div class="btn" style="left:1861.7px;top:60px;width:40.2px;height:37px;border-radius:0 4px 4px 0"></div>
<svg class="abs" style="left:1790.6px;top:71.4px" width="17" height="14" viewBox="0 0 17 14"><g fill="#15181d"><rect y="0.4" width="17" height="2.1"/><rect y="4.1" width="17" height="2.1"/><rect y="7.8" width="17" height="2.1"/><rect y="11.5" width="17" height="2.1"/></g></svg>
<svg class="abs" style="left:1832.4px;top:70px" width="17" height="17" viewBox="0 0 17 17"><g fill="#343b4a"><rect x="0" y="0" width="17" height="1.3"/><rect x="0.4" y="2.8" width="6.8" height="13.4"/><rect x="9.4" y="2.8" width="7.2" height="6.6"/></g></svg>
<svg class="abs" style="left:1873.6px;top:70px" width="17" height="17" viewBox="0 0 17 17"><g fill="none" stroke="#343b4a" stroke-width="1.15"><path d="M5.4 5 V0.7 H16.3 V16.3 H0.7 V5.2 H16.3 M0.7 9 H16.3 M0.7 12.7 H16.3 M5.4 5.2 V16.3 M10.9 0.7 V16.3"/></g></svg>
<div class="row hd" style="top:117px;height:47px"></div>
<div class="cb" style="top:132.2px"></div>
<span class="t" style="left:214.60px;top:132px;font-size:15.4px;color:#1f2937;-webkit-text-stroke:0.55px #1f2937;letter-spacing:0.13px;">Referensi Order</span>
<span class="t" style="left:484.32px;top:132px;font-size:15.4px;color:#1f2937;-webkit-text-stroke:0.55px #1f2937;letter-spacing:-0.3px;">Sesi</span>
<span class="t" style="left:593.96px;top:132px;font-size:15.4px;color:#1f2937;-webkit-text-stroke:0.55px #1f2937;letter-spacing:-0.3px;">Tanggal</span>
<span class="t" style="left:767.60px;top:132px;font-size:15.4px;color:#1f2937;-webkit-text-stroke:0.55px #1f2937;letter-spacing:-0.3px;">POS</span>
<span class="t" style="left:903.50px;top:132px;font-size:15.4px;color:#1f2937;-webkit-text-stroke:0.55px #1f2937;letter-spacing:-0.3px;">Nomor Kuitansi</span>
<span class="t" style="left:1113.80px;top:132px;font-size:15.4px;color:#1f2937;-webkit-text-stroke:0.55px #1f2937;letter-spacing:-0.3px;">Pelanggan</span>
<span class="t" style="left:1408.10px;top:132px;font-size:15.4px;color:#1f2937;-webkit-text-stroke:0.55px #1f2937;letter-spacing:-0.002px;">Kasir</span>
<span class="t" style="left:1707.72px;top:132px;font-size:15.4px;color:#1f2937;-webkit-text-stroke:0.55px #1f2937;letter-spacing:0.021px;">Status</span>
<span class="t" style="left:1663.04px;top:132px;font-size:15.4px;color:#1f2937;-webkit-text-stroke:0.55px #1f2937;transform:scaleX(1.0744);transform-origin:0 0;">Total</span>
<svg class="abs" style="left:1883px;top:134.4px" width="17" height="15" viewBox="0 0 17 15"><g stroke="#343b4a" stroke-width="1.2"><path d="M0 4 H16.6 M0 11 H16.6"/></g><circle cx="11.6" cy="4" r="2.5" fill="#343b4a"/><circle cx="5.4" cy="11" r="2.5" fill="#343b4a"/></svg>
<div class="row" style="top:164px;height:46px"></div>
<div class="cb" style="top:177.4px"></div>
<span class="t" style="left:214.86px;top:176px;font-size:15.4px;color:#3b4350;-webkit-text-stroke:0.32px #3b4350;letter-spacing:0.184px;">Toko NYC/0003</span>
<div class="abs" style="left:1409.6px;top:173.0px;width:26.4px;height:26.4px"><svg width="26.4" height="26.4" viewBox="0 0 28 28" style="display:block"><circle cx="14" cy="14" r="13.55" fill="#fff" stroke="#63c463" stroke-width="0.8"/><circle cx="14" cy="14" r="10.7" fill="none" stroke="#b4b4bc" stroke-width="1.6" stroke-dasharray="0.9 0.6" opacity=".8"/><path d="M7.4 15.2 Q8.2 12 14 8.6 Q19.8 12 20.6 15.2" fill="none" stroke="#6fd36f" stroke-width="0.9" stroke-dasharray="1.1 0.5"/><path d="M8.4 12.2 Q10 9.8 14 7.6 Q18 9.8 19.6 12.2" fill="none" stroke="#a8e5a8" stroke-width="0.6" stroke-dasharray="0.8 0.6"/><rect x="12" y="13" width="4" height="2.8" rx="0.5" fill="#e07fa6" opacity=".85"/><path d="M13 13.9 H15 M13.4 14.9 H14.6" stroke="#fbe3ec" stroke-width="0.5"/><path d="M10 16 Q14 19.2 18 16" fill="none" stroke="#45cc45" stroke-width="1.35" stroke-linecap="round"/><path d="M8.8 18.5 Q14 22.9 19.2 18.5" fill="none" stroke="#2fc22f" stroke-width="2.1" stroke-linecap="round"/><circle cx="2.5" cy="14" r="0.95" fill="#222"/><circle cx="25.5" cy="14" r="0.95" fill="#222"/></svg></div>
<span class="t" style="left:1440.20px;top:178px;font-size:15.4px;color:#414a59;letter-spacing:0.338px;">Administrator</span>
<span class="t" style="left:1633.70px;top:176px;font-size:15.4px;color:#3b4350;-webkit-text-stroke:0.32px #3b4350;letter-spacing:0.155px;">Rp 1.000</span>
<div class="bdg g" style="left:1707.9px;top:172.8px;width:128px"></div>
<span class="t" style="left:1719.00px;top:174px;font-size:12.9px;color:#fff;font-weight:bold;letter-spacing:-0.079px;">Telah Difakturkan</span>
<div class="row alt" style="top:210px;height:47px"></div>
<div class="cb" style="top:223.4px"></div>
<span class="t" style="left:214.86px;top:222px;font-size:15.4px;color:#3b4350;-webkit-text-stroke:0.32px #3b4350;letter-spacing:0.184px;">Toko NYC/0002</span>
<div class="abs" style="left:1409.6px;top:219.0px;width:26.4px;height:26.4px"><svg width="26.4" height="26.4" viewBox="0 0 28 28" style="display:block"><circle cx="14" cy="14" r="13.55" fill="#fff" stroke="#63c463" stroke-width="0.8"/><circle cx="14" cy="14" r="10.7" fill="none" stroke="#b4b4bc" stroke-width="1.6" stroke-dasharray="0.9 0.6" opacity=".8"/><path d="M7.4 15.2 Q8.2 12 14 8.6 Q19.8 12 20.6 15.2" fill="none" stroke="#6fd36f" stroke-width="0.9" stroke-dasharray="1.1 0.5"/><path d="M8.4 12.2 Q10 9.8 14 7.6 Q18 9.8 19.6 12.2" fill="none" stroke="#a8e5a8" stroke-width="0.6" stroke-dasharray="0.8 0.6"/><rect x="12" y="13" width="4" height="2.8" rx="0.5" fill="#e07fa6" opacity=".85"/><path d="M13 13.9 H15 M13.4 14.9 H14.6" stroke="#fbe3ec" stroke-width="0.5"/><path d="M10 16 Q14 19.2 18 16" fill="none" stroke="#45cc45" stroke-width="1.35" stroke-linecap="round"/><path d="M8.8 18.5 Q14 22.9 19.2 18.5" fill="none" stroke="#2fc22f" stroke-width="2.1" stroke-linecap="round"/><circle cx="2.5" cy="14" r="0.95" fill="#222"/><circle cx="25.5" cy="14" r="0.95" fill="#222"/></svg></div>
<span class="t" style="left:1440.20px;top:224px;font-size:15.4px;color:#414a59;letter-spacing:0.338px;">Administrator</span>
<span class="t" style="left:1624.80px;top:222px;font-size:15.4px;color:#3b4350;-webkit-text-stroke:0.32px #3b4350;letter-spacing:0.32px;">Rp 11.000</span>
<div class="bdg g" style="left:1707.9px;top:218.8px;width:128px"></div>
<span class="t" style="left:1719.00px;top:220px;font-size:12.9px;color:#fff;font-weight:bold;letter-spacing:-0.079px;">Telah Difakturkan</span>
<div class="row" style="top:257px;height:46px"></div>
<div class="cb" style="top:270.4px"></div>
<span class="t" style="left:214.86px;top:269px;font-size:15.4px;color:#3b4350;-webkit-text-stroke:0.32px #3b4350;letter-spacing:0.134px;">Toko NYC/0001</span>
<div class="abs" style="left:1409.6px;top:266.0px;width:26.4px;height:26.4px"><svg width="26.4" height="26.4" viewBox="0 0 28 28" style="display:block"><circle cx="14" cy="14" r="13.55" fill="#fff" stroke="#63c463" stroke-width="0.8"/><circle cx="14" cy="14" r="10.7" fill="none" stroke="#b4b4bc" stroke-width="1.6" stroke-dasharray="0.9 0.6" opacity=".8"/><path d="M7.4 15.2 Q8.2 12 14 8.6 Q19.8 12 20.6 15.2" fill="none" stroke="#6fd36f" stroke-width="0.9" stroke-dasharray="1.1 0.5"/><path d="M8.4 12.2 Q10 9.8 14 7.6 Q18 9.8 19.6 12.2" fill="none" stroke="#a8e5a8" stroke-width="0.6" stroke-dasharray="0.8 0.6"/><rect x="12" y="13" width="4" height="2.8" rx="0.5" fill="#e07fa6" opacity=".85"/><path d="M13 13.9 H15 M13.4 14.9 H14.6" stroke="#fbe3ec" stroke-width="0.5"/><path d="M10 16 Q14 19.2 18 16" fill="none" stroke="#45cc45" stroke-width="1.35" stroke-linecap="round"/><path d="M8.8 18.5 Q14 22.9 19.2 18.5" fill="none" stroke="#2fc22f" stroke-width="2.1" stroke-linecap="round"/><circle cx="2.5" cy="14" r="0.95" fill="#222"/><circle cx="25.5" cy="14" r="0.95" fill="#222"/></svg></div>
<span class="t" style="left:1440.20px;top:271px;font-size:15.4px;color:#414a59;letter-spacing:0.338px;">Administrator</span>
<span class="t" style="left:1624.80px;top:269px;font-size:15.4px;color:#3b4350;-webkit-text-stroke:0.32px #3b4350;letter-spacing:0.32px;">Rp 11.000</span>
<div class="bdg g" style="left:1707.9px;top:265.8px;width:128px"></div>
<span class="t" style="left:1719.00px;top:267px;font-size:12.9px;color:#fff;font-weight:bold;letter-spacing:-0.079px;">Telah Difakturkan</span>
<div class="row alt" style="top:303px;height:47px"></div>
<div class="cb" style="top:316.4px"></div>
<span class="t" style="left:214.80px;top:315px;font-size:15.4px;color:#7d848f;">/</span>
<div class="abs" style="left:1409.6px;top:312.0px;width:26.4px;height:26.4px;opacity:.8"><svg width="26.4" height="26.4" viewBox="0 0 28 28" style="display:block"><circle cx="14" cy="14" r="13.55" fill="#fff" stroke="#63c463" stroke-width="0.8"/><circle cx="14" cy="14" r="10.7" fill="none" stroke="#b4b4bc" stroke-width="1.6" stroke-dasharray="0.9 0.6" opacity=".8"/><path d="M7.4 15.2 Q8.2 12 14 8.6 Q19.8 12 20.6 15.2" fill="none" stroke="#6fd36f" stroke-width="0.9" stroke-dasharray="1.1 0.5"/><path d="M8.4 12.2 Q10 9.8 14 7.6 Q18 9.8 19.6 12.2" fill="none" stroke="#a8e5a8" stroke-width="0.6" stroke-dasharray="0.8 0.6"/><rect x="12" y="13" width="4" height="2.8" rx="0.5" fill="#e07fa6" opacity=".85"/><path d="M13 13.9 H15 M13.4 14.9 H14.6" stroke="#fbe3ec" stroke-width="0.5"/><path d="M10 16 Q14 19.2 18 16" fill="none" stroke="#45cc45" stroke-width="1.35" stroke-linecap="round"/><path d="M8.8 18.5 Q14 22.9 19.2 18.5" fill="none" stroke="#2fc22f" stroke-width="2.1" stroke-linecap="round"/><circle cx="2.5" cy="14" r="0.95" fill="#222"/><circle cx="25.5" cy="14" r="0.95" fill="#222"/></svg></div>
<span class="t" style="left:1440.20px;top:317px;font-size:15.4px;color:#7d848f;letter-spacing:0.338px;">Administrator</span>
<span class="t" style="left:1615.80px;top:315px;font-size:15.4px;color:#7d848f;letter-spacing:0.206px;">Rp 100.000</span>
<div class="bdg s" style="left:1707.9px;top:311.8px;width:87px"></div>
<span class="t" style="left:1717.91px;top:313px;font-size:12.9px;color:#15181e;-webkit-text-stroke:0.55px #15181e;transform:scaleX(1.0824);transform-origin:0 0;">Dibatalkan</span>
<div class="row" style="top:350px;height:45px"></div>
<div class="cb" style="top:363.4px"></div>
<span class="t" style="left:214.80px;top:362px;font-size:15.4px;color:#7d848f;">/</span>
<span class="t" style="left:1664.10px;top:362px;font-size:15.4px;color:#7d848f;letter-spacing:0.219px;">Rp 0</span>
<div class="bdg s" style="left:1707.9px;top:358.8px;width:87px"></div>
<span class="t" style="left:1717.91px;top:360px;font-size:12.9px;color:#15181e;-webkit-text-stroke:0.55px #15181e;transform:scaleX(1.0824);transform-origin:0 0;">Dibatalkan</span>
<div class="row alt" style="top:395px;height:45px"></div>
<div class="cb" style="top:408.4px"></div>
<span class="t" style="left:214.32px;top:407px;font-size:15.4px;color:#3b4350;-webkit-text-stroke:0.32px #3b4350;transform:scaleX(1.0648);transform-origin:0 0;">Kantin Ahmad/0029</span>
<span class="t" style="left:1624.80px;top:407px;font-size:15.4px;color:#3b4350;-webkit-text-stroke:0.32px #3b4350;letter-spacing:0.32px;">Rp 11.000</span>
<div class="bdg g" style="left:1707.9px;top:403.8px;width:128px"></div>
<span class="t" style="left:1719.00px;top:405px;font-size:12.9px;color:#fff;font-weight:bold;letter-spacing:-0.079px;">Telah Difakturkan</span>
<div class="row" style="top:440px;height:45px"></div>
<div class="cb" style="top:453.4px"></div>
<span class="t" style="left:214.32px;top:452px;font-size:15.4px;color:#3b4350;-webkit-text-stroke:0.32px #3b4350;transform:scaleX(1.0648);transform-origin:0 0;">Kantin Ahmad/0028</span>
<span class="t" style="left:483.40px;top:452px;font-size:15.4px;color:#414a59;letter-spacing:-0.3px;">POS/00108</span>
<span class="t" style="left:593.52px;top:452px;font-size:15.4px;color:#414a59;letter-spacing:0.244px;">09/07/2025 11:11:15</span>
<span class="t" style="left:767.40px;top:452px;font-size:15.4px;color:#414a59;letter-spacing:0.212px;">Kantin Ahmad</span>
<span class="t" style="left:903.78px;top:452px;font-size:15.4px;color:#414a59;letter-spacing:0.104px;">Order 00138-001-0001</span>
<span class="t" style="left:1113.60px;top:452px;font-size:15.4px;color:#414a59;letter-spacing:0.125px;">Muhammad Geral Herpavy</span>
<span class="t" style="left:1615.80px;top:452px;font-size:15.4px;color:#3b4350;-webkit-text-stroke:0.32px #3b4350;letter-spacing:0.206px;">Rp 150.000</span>
<div class="bdg g" style="left:1707.9px;top:448.8px;width:128px"></div>
<span class="t" style="left:1719.00px;top:450px;font-size:12.9px;color:#fff;font-weight:bold;letter-spacing:-0.079px;">Telah Difakturkan</span>
<div class="row alt" style="top:485px;height:45px"></div>
<div class="cb" style="top:498.4px"></div>
<span class="t" style="left:214.80px;top:497px;font-size:15.4px;color:#7d848f;">/</span>
<span class="t" style="left:483.40px;top:497px;font-size:15.4px;color:#7d848f;letter-spacing:-0.3px;">POS/00107</span>
<span class="t" style="left:593.52px;top:497px;font-size:15.4px;color:#7d848f;letter-spacing:0.167px;">09/07/2025 11:09:40</span>
<span class="t" style="left:767.40px;top:497px;font-size:15.4px;color:#7d848f;letter-spacing:0.212px;">Kantin Ahmad</span>
<span class="t" style="left:903.78px;top:497px;font-size:15.4px;color:#7d848f;letter-spacing:0.104px;">Order 00137-003-0001</span>
<span class="t" style="left:1113.60px;top:497px;font-size:15.4px;color:#7d848f;letter-spacing:0.125px;">Muhammad Geral Herpavy</span>
<span class="t" style="left:1615.80px;top:497px;font-size:15.4px;color:#7d848f;letter-spacing:0.206px;">Rp 150.000</span>
<div class="bdg s" style="left:1707.9px;top:493.8px;width:87px"></div>
<span class="t" style="left:1717.91px;top:495px;font-size:12.9px;color:#15181e;-webkit-text-stroke:0.55px #15181e;transform:scaleX(1.0824);transform-origin:0 0;">Dibatalkan</span>
<div class="row" style="top:530px;height:44px"></div>
<div class="cb" style="top:543.4px"></div>
<span class="t" style="left:214.40px;top:542px;font-size:15.4px;color:#3b4350;-webkit-text-stroke:0.32px #3b4350;letter-spacing:0.196px;">Kantin Ahmad/0026 REFUND</span>
<span class="t" style="left:483.40px;top:542px;font-size:15.4px;color:#414a59;letter-spacing:-0.3px;">POS/00107</span>
<span class="t" style="left:593.52px;top:542px;font-size:15.4px;color:#414a59;letter-spacing:0.104px;">02/07/2025 12:55:30</span>
<span class="t" style="left:767.40px;top:542px;font-size:15.4px;color:#414a59;letter-spacing:0.212px;">Kantin Ahmad</span>
<span class="t" style="left:903.78px;top:542px;font-size:15.4px;color:#414a59;letter-spacing:0.104px;">Order 00127-001-0001</span>
<span class="t" style="left:1113.60px;top:542px;font-size:15.4px;color:#414a59;letter-spacing:0.292px;">Muhammad Zayn Mubarok</span>
<span class="t" style="left:1618.40px;top:542px;font-size:15.4px;color:#3b4350;-webkit-text-stroke:0.32px #3b4350;letter-spacing:0.299px;">Rp -13.500</span>
<div class="bdg g" style="left:1707.9px;top:538.8px;width:73.6px"></div>
<span class="t" style="left:1719.00px;top:540px;font-size:12.9px;color:#fff;font-weight:bold;letter-spacing:-0.054px;">Terekam</span>
<div class="row alt" style="top:574px;height:45px"></div>
<div class="cb" style="top:587.4px"></div>
<span class="t" style="left:214.40px;top:586px;font-size:15.4px;color:#3b4350;-webkit-text-stroke:0.32px #3b4350;letter-spacing:0.196px;">Kantin Ahmad/0027 REFUND</span>
<span class="t" style="left:483.40px;top:586px;font-size:15.4px;color:#414a59;letter-spacing:-0.3px;">POS/00107</span>
<span class="t" style="left:593.52px;top:586px;font-size:15.4px;color:#414a59;letter-spacing:0.104px;">02/07/2025 12:55:20</span>
<span class="t" style="left:767.40px;top:586px;font-size:15.4px;color:#414a59;letter-spacing:0.212px;">Kantin Ahmad</span>
<span class="t" style="left:903.78px;top:586px;font-size:15.4px;color:#414a59;letter-spacing:0.104px;">Order 00131-001-0001</span>
<span class="t" style="left:1113.60px;top:586px;font-size:15.4px;color:#414a59;letter-spacing:0.292px;">Muhammad Zayn Mubarok</span>
<span class="t" style="left:1618.40px;top:586px;font-size:15.4px;color:#3b4350;-webkit-text-stroke:0.32px #3b4350;letter-spacing:0.299px;">Rp -13.500</span>
<div class="bdg g" style="left:1707.9px;top:582.8px;width:73.6px"></div>
<span class="t" style="left:1719.00px;top:584px;font-size:12.9px;color:#fff;font-weight:bold;letter-spacing:-0.054px;">Terekam</span>
<div class="row" style="top:619px;height:45px"></div>
<div class="cb" style="top:632.4px"></div>
<span class="t" style="left:214.40px;top:631px;font-size:15.4px;color:#3b4350;-webkit-text-stroke:0.32px #3b4350;letter-spacing:0.148px;">Kantin Zaid/0046 REFUND</span>
<span class="t" style="left:483.40px;top:631px;font-size:15.4px;color:#414a59;letter-spacing:-0.3px;">POS/00106</span>
<span class="t" style="left:593.52px;top:631px;font-size:15.4px;color:#414a59;letter-spacing:0.117px;">02/07/2025 12:55:01</span>
<span class="t" style="left:767.40px;top:631px;font-size:15.4px;color:#414a59;letter-spacing:0.157px;">Kantin Zaid</span>
<span class="t" style="left:903.78px;top:631px;font-size:15.4px;color:#414a59;letter-spacing:0.104px;">Order 00133-001-0001</span>
<span class="t" style="left:1113.60px;top:631px;font-size:15.4px;color:#414a59;letter-spacing:0.292px;">Muhammad Zayn Mubarok</span>
<span class="t" style="left:1618.33px;top:631px;font-size:15.4px;color:#3b4350;-webkit-text-stroke:0.32px #3b4350;transform:scaleX(1.0522);transform-origin:0 0;">Rp -11.000</span>
<div class="bdg g" style="left:1707.9px;top:627.8px;width:73.6px"></div>
<span class="t" style="left:1719.00px;top:629px;font-size:12.9px;color:#fff;font-weight:bold;letter-spacing:-0.054px;">Terekam</span>
<div class="row alt" style="top:664px;height:45px"></div>
<div class="cb" style="top:677.4px"></div>
<span class="t" style="left:214.32px;top:676px;font-size:15.4px;color:#3b4350;-webkit-text-stroke:0.32px #3b4350;transform:scaleX(1.0645);transform-origin:0 0;">Kantin Zaid/0046</span>
<span class="t" style="left:483.40px;top:676px;font-size:15.4px;color:#414a59;letter-spacing:-0.3px;">POS/00103</span>
<span class="t" style="left:593.52px;top:676px;font-size:15.4px;color:#414a59;letter-spacing:0.18px;">02/07/2025 11:21:28</span>
<span class="t" style="left:767.40px;top:676px;font-size:15.4px;color:#414a59;letter-spacing:0.157px;">Kantin Zaid</span>
<span class="t" style="left:903.78px;top:676px;font-size:15.4px;color:#414a59;letter-spacing:0.104px;">Order 00133-001-0001</span>
<span class="t" style="left:1113.60px;top:676px;font-size:15.4px;color:#414a59;letter-spacing:0.292px;">Muhammad Zayn Mubarok</span>
<span class="t" style="left:1624.80px;top:676px;font-size:15.4px;color:#3b4350;-webkit-text-stroke:0.32px #3b4350;letter-spacing:0.32px;">Rp 11.000</span>
<div class="bdg g" style="left:1707.9px;top:672.8px;width:128px"></div>
<span class="t" style="left:1719.00px;top:674px;font-size:12.9px;color:#fff;font-weight:bold;letter-spacing:-0.079px;">Telah Difakturkan</span>
<div class="row" style="top:709px;height:45px"></div>
<div class="cb" style="top:722.4px"></div>
<span class="t" style="left:214.32px;top:721px;font-size:15.4px;color:#3b4350;-webkit-text-stroke:0.32px #3b4350;transform:scaleX(1.0648);transform-origin:0 0;">Kantin Ahmad/0027</span>
<span class="t" style="left:483.40px;top:721px;font-size:15.4px;color:#414a59;letter-spacing:-0.3px;">POS/00101</span>
<span class="t" style="left:593.52px;top:721px;font-size:15.4px;color:#414a59;letter-spacing:0.18px;">02/07/2025 11:07:03</span>
<span class="t" style="left:767.40px;top:721px;font-size:15.4px;color:#414a59;letter-spacing:0.212px;">Kantin Ahmad</span>
<span class="t" style="left:903.78px;top:721px;font-size:15.4px;color:#414a59;letter-spacing:0.104px;">Order 00131-001-0001</span>
<span class="t" style="left:1113.60px;top:721px;font-size:15.4px;color:#414a59;letter-spacing:0.292px;">Muhammad Zayn Mubarok</span>
<span class="t" style="left:1624.80px;top:721px;font-size:15.4px;color:#3b4350;-webkit-text-stroke:0.32px #3b4350;letter-spacing:0.177px;">Rp 13.500</span>
<div class="bdg g" style="left:1707.9px;top:717.8px;width:128px"></div>
<span class="t" style="left:1719.00px;top:719px;font-size:12.9px;color:#fff;font-weight:bold;letter-spacing:-0.079px;">Telah Difakturkan</span>
<div class="row alt" style="top:754px;height:45px"></div>
<div class="cb" style="top:767.4px"></div>
<span class="t" style="left:214.32px;top:766px;font-size:15.4px;color:#3b4350;-webkit-text-stroke:0.32px #3b4350;transform:scaleX(1.0648);transform-origin:0 0;">Kantin Ahmad/0026</span>
<span class="t" style="left:483.40px;top:766px;font-size:15.4px;color:#414a59;letter-spacing:-0.3px;">POS/00097</span>
<span class="t" style="left:593.52px;top:766px;font-size:15.4px;color:#414a59;letter-spacing:0.104px;">02/07/2025 10:38:00</span>
<span class="t" style="left:767.40px;top:766px;font-size:15.4px;color:#414a59;letter-spacing:0.212px;">Kantin Ahmad</span>
<span class="t" style="left:903.78px;top:766px;font-size:15.4px;color:#414a59;letter-spacing:0.104px;">Order 00127-001-0001</span>
<span class="t" style="left:1113.60px;top:766px;font-size:15.4px;color:#414a59;letter-spacing:0.292px;">Muhammad Zayn Mubarok</span>
<span class="t" style="left:1624.80px;top:766px;font-size:15.4px;color:#3b4350;-webkit-text-stroke:0.32px #3b4350;letter-spacing:0.177px;">Rp 13.500</span>
<div class="bdg g" style="left:1707.9px;top:762.8px;width:128px"></div>
<span class="t" style="left:1719.00px;top:764px;font-size:12.9px;color:#fff;font-weight:bold;letter-spacing:-0.079px;">Telah Difakturkan</span>
<div class="row" style="top:799px;height:45px"></div>
<div class="cb" style="top:812.4px"></div>
<span class="t" style="left:214.32px;top:811px;font-size:15.4px;color:#3b4350;-webkit-text-stroke:0.32px #3b4350;transform:scaleX(1.0648);transform-origin:0 0;">Kantin Ahmad/0025</span>
<span class="t" style="left:483.40px;top:811px;font-size:15.4px;color:#414a59;letter-spacing:-0.33px;">POS/00094</span>
<span class="t" style="left:593.28px;top:811px;font-size:15.4px;color:#414a59;letter-spacing:0.13px;">23/06/2025 20:22:07</span>
<span class="t" style="left:767.40px;top:811px;font-size:15.4px;color:#414a59;letter-spacing:0.212px;">Kantin Ahmad</span>
<span class="t" style="left:903.78px;top:811px;font-size:15.4px;color:#414a59;letter-spacing:0.104px;">Order 00124-002-0001</span>
<span class="t" style="left:1113.60px;top:811px;font-size:15.4px;color:#414a59;letter-spacing:0.125px;">Muhammad Geral Herpavy</span>
<span class="t" style="left:1624.80px;top:811px;font-size:15.4px;color:#3b4350;-webkit-text-stroke:0.32px #3b4350;letter-spacing:0.177px;">Rp 32.660</span>
<div class="bdg g" style="left:1707.9px;top:807.8px;width:73.6px"></div>
<span class="t" style="left:1719.00px;top:809px;font-size:12.9px;color:#fff;font-weight:bold;letter-spacing:-0.054px;">Terekam</span>
<div class="row alt" style="top:844px;height:45px"></div>
<div class="cb" style="top:857.4px"></div>
<span class="t" style="left:214.32px;top:856px;font-size:15.4px;color:#3b4350;-webkit-text-stroke:0.32px #3b4350;transform:scaleX(1.0648);transform-origin:0 0;">Kantin Ahmad/0022</span>
<span class="t" style="left:483.40px;top:856px;font-size:15.4px;color:#414a59;letter-spacing:-0.33px;">POS/00090</span>
<span class="t" style="left:593.04px;top:856px;font-size:15.4px;color:#414a59;letter-spacing:0.144px;">18/06/2025 14:49:37</span>
<span class="t" style="left:767.40px;top:856px;font-size:15.4px;color:#414a59;letter-spacing:0.212px;">Kantin Ahmad</span>
<span class="t" style="left:903.78px;top:856px;font-size:15.4px;color:#414a59;letter-spacing:0.104px;">Order 00120-001-0002</span>
<span class="t" style="left:1113.60px;top:856px;font-size:15.4px;color:#414a59;letter-spacing:0.171px;">Muhammad Naufal Raihan</span>
<span class="t" style="left:1624.80px;top:856px;font-size:15.4px;color:#3b4350;-webkit-text-stroke:0.32px #3b4350;letter-spacing:0.177px;">Rp 16.000</span>
<div class="bdg g" style="left:1707.9px;top:852.8px;width:73.6px"></div>
<span class="t" style="left:1719.00px;top:854px;font-size:12.9px;color:#fff;font-weight:bold;letter-spacing:-0.054px;">Terekam</span>
<div class="row" style="top:889px;height:45px"></div>
<div class="cb" style="top:901.4px"></div>
<span class="t" style="left:214.32px;top:900px;font-size:15.4px;color:#3b4350;-webkit-text-stroke:0.32px #3b4350;transform:scaleX(1.0603);transform-origin:0 0;">Kantin Ahmad/0021</span>
<span class="t" style="left:483.40px;top:900px;font-size:15.4px;color:#414a59;letter-spacing:-0.33px;">POS/00090</span>
<span class="t" style="left:593.04px;top:900px;font-size:15.4px;color:#414a59;letter-spacing:0.144px;">18/06/2025 14:47:12</span>
<span class="t" style="left:767.40px;top:900px;font-size:15.4px;color:#414a59;letter-spacing:0.212px;">Kantin Ahmad</span>
<span class="t" style="left:903.78px;top:900px;font-size:15.4px;color:#414a59;letter-spacing:0.104px;">Order 00120-001-0001</span>
<span class="t" style="left:1615.80px;top:900px;font-size:15.4px;color:#3b4350;-webkit-text-stroke:0.32px #3b4350;letter-spacing:0.206px;">Rp 150.000</span>
<div class="bdg g" style="left:1707.9px;top:897.8px;width:73.6px"></div>
<span class="t" style="left:1719.00px;top:899px;font-size:12.9px;color:#fff;font-weight:bold;letter-spacing:-0.054px;">Terekam</span>
<div class="abs" style="left:1911px;top:117px;width:7px;height:789px;background:#f3f4f6"></div>
<div class="abs" style="left:1911px;top:118px;width:7px;height:171px;background:#8a8a8a;border-radius:4px 0 0 4px"></div>
<div class="abs" style="left:463px;top:109px;width:861px;height:328px;background:#fff"></div>
<div class="abs" style="left:465px;top:110px;width:857px;height:326px;background:#fff;border:1px solid #dfe3e8"></div>
<svg class="abs" style="left:455px;top:104px" width="875" height="339" viewBox="455 104 875 339"><rect x="460.95" y="109.45" width="863" height="327.6" rx="1.6" fill="none" stroke="#fe0000" stroke-width="4.1"/></svg>
<svg class="abs" style="left:502.4px;top:134.8px" width="14" height="13" viewBox="0 0 14 13"><path d="M0.2 0.1 H13.6 L8.7 5.9 V13 L5.2 10.2 V5.9z" fill="#0f5c55"/></svg>
<span class="t" style="left:524.64px;top:132px;font-size:15.6px;color:#1f2937;-webkit-text-stroke:0.55px #1f2937;transform:scaleX(1.1196);transform-origin:0 0;">Penyaring</span>
<span class="t" style="left:507.36px;top:168px;font-size:15.4px;color:#414a59;letter-spacing:0.095px;">Telah Difakturkan</span>
<span class="t" style="left:507.36px;top:199px;font-size:15.4px;color:#414a59;letter-spacing:-0.202px;">Terekam</span>
<span class="t" style="left:506.40px;top:229px;font-size:15.4px;color:#414a59;letter-spacing:0.245px;">Dibatalkan</span>
<span class="t" style="left:507.36px;top:278px;font-size:15.4px;color:#414a59;letter-spacing:0.044px;">Tanggal Order</span>
<span class="t" style="left:507.36px;top:328px;font-size:15.4px;color:#414a59;letter-spacing:-0.035px;">Tambahkan Penyaring Sendiri</span>
<div class="abs" style="left:484px;top:262px;width:249px;height:1px;background:#dfe2e6"></div>
<div class="abs" style="left:484px;top:311.2px;width:249px;height:1px;background:#dfe2e6"></div>
<svg class="abs" style="left:715.2px;top:284.4px" width="9" height="5" viewBox="0 0 9 5"><path d="M0 0 H8.8 L4.4 4.9z" fill="#374151"/></svg>
<div class="abs" style="left:751px;top:127px;width:1px;height:225px;background:#dfe2e6"></div>
<svg class="abs" style="left:788.4px;top:132.4px" width="17" height="17" viewBox="0 0 17 17"><g fill="#1ea46c"><path d="M8.5 0 L17 4.2 L8.5 8.4 L0 4.2z"/><path d="M2.2 7.2 L0 8.3 L8.5 12.5 L17 8.3 L14.8 7.2 L8.5 10.3z"/><path d="M2.2 11.3 L0 12.4 L8.5 16.6 L17 12.4 L14.8 11.3 L8.5 14.4z"/></g></svg>
<span class="t" style="left:814.08px;top:132px;font-size:15.6px;color:#1f2937;-webkit-text-stroke:0.55px #1f2937;transform:scaleX(1.1669);transform-origin:0 0;">Dikelompokkan</span>
<span class="t" style="left:787.91px;top:158px;font-size:15.6px;color:#1f2937;-webkit-text-stroke:0.55px #1f2937;transform:scaleX(1.1217);transform-origin:0 0;">berdasarkan</span>
<span class="t" style="left:793.06px;top:194px;font-size:15.4px;color:#414a59;transform:scaleX(0.9205);transform-origin:0 0;">Sesi</span>
<span class="t" style="left:792.30px;top:225px;font-size:15.4px;color:#414a59;letter-spacing:-0.252px;">Kasir</span>
<span class="t" style="left:792.39px;top:255px;font-size:15.4px;color:#414a59;transform:scaleX(0.9227);transform-origin:0 0;">POS</span>
<span class="t" style="left:792.30px;top:285px;font-size:15.4px;color:#414a59;letter-spacing:0.053px;">Pelanggan</span>
<span class="t" style="left:793.02px;top:316px;font-size:15.4px;color:#414a59;letter-spacing:-0.259px;">Status</span>
<span class="t" style="left:793.26px;top:346px;font-size:15.4px;color:#414a59;letter-spacing:0.077px;">Tanggal Order</span>
<span class="t" style="left:793.26px;top:395px;font-size:15.4px;color:#414a59;letter-spacing:0.016px;">Tambahkan Grup Kustom</span>
<svg class="abs" style="left:1029.2px;top:352.2px" width="9" height="5" viewBox="0 0 9 5"><path d="M0 0 H8.8 L4.4 4.9z" fill="#374151"/></svg>
<div class="abs" style="left:770px;top:379px;width:277px;height:1px;background:#dfe2e6"></div>
<svg class="abs" style="left:1025px;top:402.2px" width="9" height="5" viewBox="0 0 9 5"><path d="M0 0 H8.4 L4.2 4.6z" fill="#7b828c"/></svg>
<div class="abs" style="left:1065.4px;top:127px;width:1px;height:292px;background:#dfe2e6"></div>
<svg class="abs" style="left:1101px;top:132.4px" width="18" height="17" viewBox="0 0 19 18"><path d="M9.5 0.4 L12.2 6 L18.4 6.8 L13.9 11.1 L15 17.2 L9.5 14.2 L4 17.2 L5.1 11.1 L0.6 6.8 L6.8 6z" fill="#f2c700"/></svg>
<span class="t" style="left:1126.82px;top:132px;font-size:15.6px;color:#1f2937;-webkit-text-stroke:0.55px #1f2937;transform:scaleX(1.1352);transform-origin:0 0;">Favorit</span>
<span class="t" style="left:1106.92px;top:168px;font-size:15.4px;color:#414a59;letter-spacing:0.025px;">Simpan pencarian saat ini</span>
<svg class="abs" style="left:1289.4px;top:174.4px" width="9" height="5" viewBox="0 0 9 5"><path d="M0 0 H8.6 L4.3 4.6z" fill="#374151"/></svg>
</body></html>
